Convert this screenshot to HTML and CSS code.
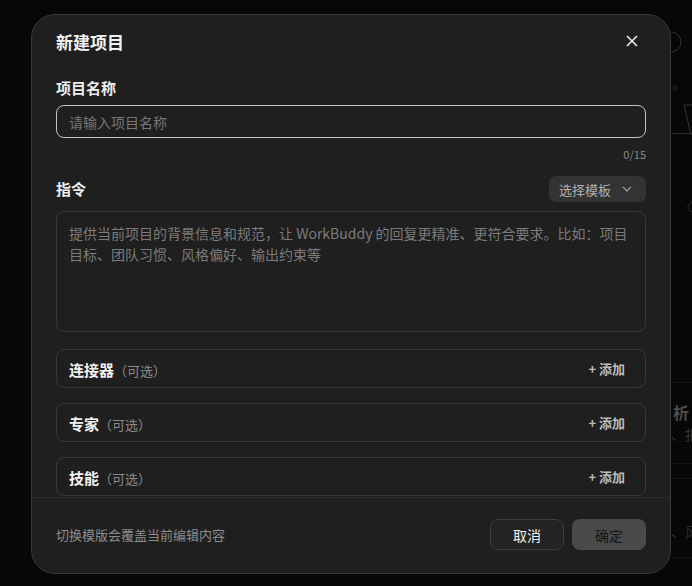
FILE: index.html
```html
<!DOCTYPE html>
<html lang="zh-CN">
<head>
  <meta charset="UTF-8" />
  <title>新建项目</title>
  <link rel="stylesheet" href="styles.css">
</head>
<body>
<div class="modal">
  <div class="modal-header">
    <div class="modal-title">新建项目</div>
    <div class="close-btn">
      <svg width="12" height="12" viewBox="0 0 12 12"><path d="M1 1L11 11M11 1L1 11" stroke="#f2f2f2" stroke-width="1.5" fill="none"/></svg>
    </div>
  </div>

  <div class="modal-body">
    <div class="field-label">项目名称</div>
    <input class="name-input" type="text" placeholder="请输入项目名称" autofocus>
    <div class="counter">0/15</div>

    <div class="section-row">
      <div class="field-label">指令</div>
      <div class="template-btn">
        <span>选择模板</span>
        <svg width="10" height="6" viewBox="0 0 10 6"><path d="M1 0.8L5 4.8L9 0.8" stroke="#a8a8a8" stroke-width="1.2" fill="none"/></svg>
      </div>
    </div>
    <textarea class="prompt-input" placeholder="提供当前项目的背景信息和规范，让 WorkBuddy 的回复更精准、更符合要求。比如：项目目标、团队习惯、风格偏好、输出约束等"></textarea>

    <div class="option-card">
      <div><span class="option-name">连接器</span><span class="option-hint">（可选）</span></div>
      <div class="add-btn">+ 添加</div>
    </div>
    <div class="option-card">
      <div><span class="option-name">专家</span><span class="option-hint">（可选）</span></div>
      <div class="add-btn">+ 添加</div>
    </div>
    <div class="option-card">
      <div><span class="option-name">技能</span><span class="option-hint">（可选）</span></div>
      <div class="add-btn">+ 添加</div>
    </div>
  </div>

  <div class="modal-footer">
    <div class="footer-hint">切换模版会覆盖当前编辑内容</div>
    <div class="footer-actions">
      <div class="btn btn-cancel">取消</div>
      <div class="btn btn-ok">确定</div>
    </div>
  </div>
</div>

<!-- page behind the dialog, mostly hidden -->
<div class="backdrop-side">
  <svg width="22" height="586" viewBox="0 0 22 586">
    <path d="M0 32 A10 10 0 0 1 0 52" stroke="#333" fill="none"/>
    <circle cx="4" cy="88" r="2" stroke="#2a2a2a" fill="none"/>
    <path d="M13 105 L22 105 M13 105 L20 135" stroke="#383838" fill="none"/>
    <path d="M0 133.5 L22 133.5" stroke="#2a2a2a"/>
    <path d="M22 202 A5 5 0 0 0 22 212" stroke="#2a2a2a" fill="none"/>
    <path d="M0 382.5 L22 382.5 M0 463.5 L22 463.5 M0 478.5 L22 478.5 M0 557.5 L22 557.5" stroke="#161616"/>
  </svg>
  <div class="side-text side-title">析</div>
  <div class="side-text side-sub">、报</div>
  <div class="side-text side-sub2">、风</div>
</div>
</body>
</html>
```

FILE: styles.css
```css
body {
  margin: 0;
  padding: 14px 0 0 31px;
  height: 586px;
  box-sizing: border-box;
  overflow: hidden;
  background: #070707;
  font-family: "Noto Sans CJK SC", "Noto Sans", sans-serif;
  display: flex;
  align-items: flex-start;
}
.modal {
  width: 640px;
  height: 560px;
  box-sizing: border-box;
  flex-shrink: 0;
  background: #1f1f1f;
  border: 1px solid #393939;
  border-radius: 24px;
  display: flex;
  flex-direction: column;
  overflow: hidden;
  position: relative;
  z-index: 1;
}
.modal-header {
  display: flex;
  justify-content: space-between;
  align-items: center;
  padding: 13px 24px 0 24px;
  height: 26px;
}
.modal-title {
  font-size: 17px;
  font-weight: bold;
  color: #f2f2f2;
}
.close-btn {
  width: 12px;
  height: 12px;
  margin-right: 8px;
  display: flex;
}
.modal-body {
  flex: 1;
  min-height: 0;
  overflow: hidden;
  padding: 0 24px;
}
.field-label {
  font-size: 15px;
  font-weight: bold;
  color: #eeeeee;
  line-height: 20px;
}
.modal-body > .field-label {
  margin-top: 24px;
}
.name-input {
  display: block;
  width: 100%;
  height: 33px;
  box-sizing: border-box;
  margin-top: 7px;
  padding: 0 12px;
  background: transparent;
  border: 1px solid #c2c2c2;
  border-radius: 8px;
  outline: none;
  font-family: inherit;
  font-size: 14px;
  color: #eee;
  caret-color: #e6e6e6;
}
.name-input::placeholder {
  color: #767676;
}
.counter {
  text-align: right;
  font-size: 11px;
  color: #8a8a8a;
  line-height: 16px;
  margin-top: 8px;
}
.section-row {
  display: flex;
  justify-content: space-between;
  align-items: center;
  margin-top: 14px;
  height: 26px;
}
.template-btn {
  display: flex;
  align-items: center;
  gap: 11px;
  height: 26px;
  padding: 0 14px 0 10px;
  background: #333333;
  border-radius: 7px;
  font-size: 13px;
  color: #b0b0b0;
}
.prompt-input {
  display: block;
  width: 100%;
  height: 121px;
  box-sizing: border-box;
  margin-top: 9px;
  padding: 11px 10px 11px 12px;
  background: transparent;
  border: 1px solid #393939;
  border-radius: 8px;
  outline: none;
  resize: none;
  font-family: inherit;
  font-size: 14px;
  line-height: 21px;
  color: #eee;
}
.prompt-input::placeholder {
  color: #7b7b7b;
}
.option-card {
  display: flex;
  justify-content: space-between;
  align-items: center;
  height: 39px;
  box-sizing: border-box;
  margin-top: 15px;
  padding: 0 20px 0 12px;
  border: 1px solid #383838;
  border-radius: 8px;
}
.prompt-input + .option-card {
  margin-top: 17px;
}
.option-name {
  font-size: 15px;
  font-weight: bold;
  color: #f2f2f2;
}
.option-hint {
  font-size: 13px;
  color: #8a8a8a;
}
.add-btn {
  font-size: 13px;
  font-weight: bold;
  color: #bcbcbc;
}
.modal-footer {
  display: flex;
  justify-content: space-between;
  align-items: center;
  height: 76px;
  box-sizing: border-box;
  padding: 0 24px 2px 24px;
  border-top: 1px solid #2a2a2a;
}
.footer-hint {
  font-size: 13px;
  color: #8c8c8c;
}
.footer-actions {
  display: flex;
  gap: 8px;
}
.btn {
  width: 74px;
  height: 31px;
  box-sizing: border-box;
  border-radius: 8px;
  display: flex;
  justify-content: center;
  align-items: center;
  font-size: 14px;
}
.btn-cancel {
  background: #232323;
  border: 1px solid #3c3c3c;
  color: #f2f2f2;
}
.btn-ok {
  background: #4a4a4a;
  color: #161616;
}
.backdrop-side {
  width: 22px;
  height: 586px;
  margin-top: -14px;
  flex-shrink: 0;
  display: flex;
  flex-direction: column;
}
.backdrop-side svg {
  display: block;
  height: 586px;
  margin-bottom: -586px;
}
.side-text {
  white-space: nowrap;
  line-height: 20px;
}
.side-title {
  margin-top: 402px;
  padding-left: 2px;
  font-size: 16px;
  font-weight: bold;
  color: #4c4c4c;
}
.side-sub {
  margin-top: 2px;
  font-size: 14px;
  color: #333;
}
.side-sub2 {
  margin-top: 77px;
  font-size: 14px;
  color: #2e2e2e;
}
```
